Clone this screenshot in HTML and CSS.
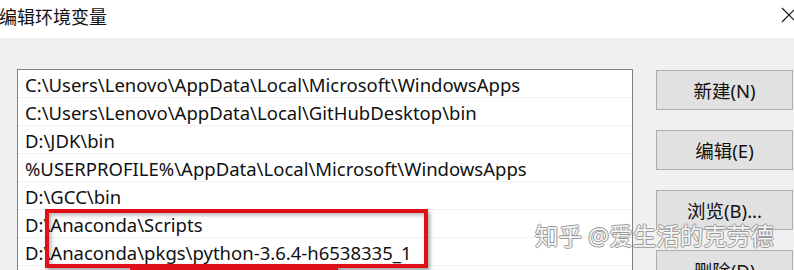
FILE: index.html
```html
<!DOCTYPE html>
<html lang="zh-CN">
<head>
  <meta charset="UTF-8">
  <title>编辑环境变量</title>
  <link rel="stylesheet" href="styles.css">
</head>
<body>

  <header class="titlebar">
    <h1>编辑环境变量</h1>
    <svg class="close" width="16" height="16" viewBox="0 0 16 16">
      <path d="M1 1 L15 15 M15 1 L1 15" stroke="#111" stroke-width="1.1" fill="none"/>
    </svg>
  </header>

  <main class="dialog">
    <div class="path-list">
      <div class="row">C:\Users\Lenovo\AppData\Local\Microsoft\WindowsApps</div>
      <div class="row">C:\Users\Lenovo\AppData\Local\GitHubDesktop\bin</div>
      <div class="row">D:\JDK\bin</div>
      <div class="row">%USERPROFILE%\AppData\Local\Microsoft\WindowsApps</div>
      <div class="row">D:\GCC\bin</div>
      <div class="row">D:\Anaconda\Scripts</div>
      <div class="row">D:\Anaconda\pkgs\python-3.6.4-h6538335_1</div>
      <div class="row">D:\Anaconda</div>

      <!-- highlight boxes drawn over the list -->
      <div class="mark mark-main"></div>
      <div class="mark mark-next"></div>
    </div>

    <div class="buttons">
      <button class="btn">新建(N)</button>
      <button class="btn">编辑(E)</button>
      <button class="btn">浏览(B)...</button>
      <button class="btn">删除(D)</button>
    </div>

    <div class="watermark">知乎 @爱生活的克劳德</div>
  </main>

</body>
</html>
```

FILE: styles.css
```css
html, body {
  margin: 0;
  padding: 0;
  height: 270px;
  overflow: hidden;
}

body {
  font-family: "Noto Sans", "Noto Sans CJK SC", sans-serif;
  background-color: #f0f0f0;
  color: #111;
}

.titlebar {
  height: 38px;
  background-color: #fff;
  display: flex;
  justify-content: space-between;
  align-items: flex-start;
}

.titlebar h1 {
  margin: 5px 0 0 -1px;
  font-size: 18px;
  font-weight: normal;
  line-height: 24px;
}

.close {
  margin: 7px -3px 0 0;
}

.dialog {
  position: relative;
  display: flex;
  align-items: flex-start;
  gap: 23px;
  padding: 31px 0 0 17px;
}

.path-list {
  position: relative;
  width: 614px;
  height: 240px;
  background-color: #fff;
  border: 1px solid #828282;
  border-bottom: none;
  overflow: hidden;
}

.row {
  height: 27px;
  line-height: 29px;
  padding-left: 7px;
  font-size: 18.5px;
  border-bottom: 1px solid #f0f0f0;
  white-space: nowrap;
}

.mark {
  position: absolute;
  border: 4px solid #e0101a;
  box-shadow: 2px 3px 4px rgba(0,0,0,0.35), inset 2px 2px 4px rgba(0,0,0,0.3);
}

.mark-main {
  left: 27px;
  top: 139px;
  width: 375px;
  height: 51px;
}

.mark-next {
  left: 112px;
  top: 197px;
  width: 200px;
  height: 40px;
}

.buttons {
  display: flex;
  flex-direction: column;
  gap: 20px;
  padding-top: 1px;
}

.btn {
  width: 137px;
  height: 40px;
  background-color: #e1e1e1;
  border: 1px solid #adadad;
  font-family: inherit;
  font-size: 18.5px;
  color: #111;
  padding: 0;
}

.watermark {
  position: absolute;
  left: 535px;
  top: 183px;
  font-size: 23.5px;
  line-height: 30px;
  color: rgba(255,255,255,0.92);
  text-shadow: 1px 0 0 #999, -1px 0 0 #999, 0 1px 0 #999, 0 -1px 0 #999;
  white-space: nowrap;
}
```
